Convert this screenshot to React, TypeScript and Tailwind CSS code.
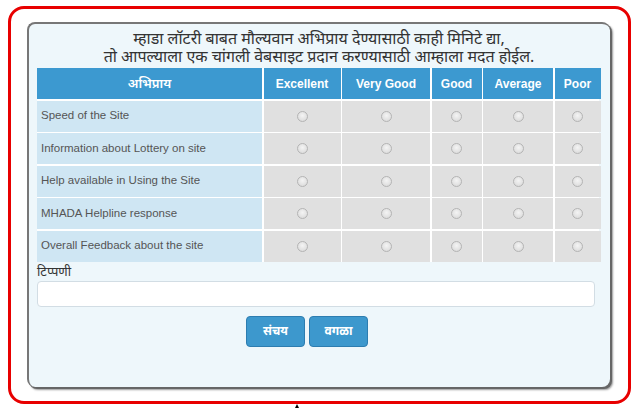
import React from 'react';

const cols = ['Excellent', 'Very Good', 'Good', 'Average', 'Poor'];

const rows = [
  'Speed of the Site',
  'Information about Lottery on site',
  'Help available in Using the Site',
  'MHADA Helpline response',
  'Overall Feedback about the site',
];

const Radio: React.FC = () => (
  <span className="block w-[11px] h-[11px] rounded-full border border-[#b4b4b4] bg-[radial-gradient(circle_at_50%_40%,#f4f4f4,#d6d6d6)]" />
);

export default function App() {
  return (
    <div className="w-[639px] h-[408px] bg-white relative" style={{ fontFamily: '"Noto Sans", "Liberation Sans", sans-serif' }}>
      <div className="pl-[8px] pt-[6px]">
        <div className="w-[623px] h-[398px] border-[3px] border-[#e80000] rounded-[16px] pl-[16px] pt-[13px]">
          {/* dialog */}
          <div className="w-[583px] h-[365px] bg-[#eef7fb] rounded-[8px] border-l-2 border-t-2 border-[#777] shadow-[2px_2px_0_#666,3px_3px_2px_#999] pl-[8px] pr-[9px]">
            <p className="text-center text-[#333] text-[16px] leading-[18px] pt-[5px] pb-[3px]">
              म्हाडा लॉटरी बाबत मौल्यवान अभिप्राय देण्यासाठी काही मिनिटे द्या,
              <br />
              तो आपल्याला एक चांगली वेबसाइट प्रदान करण्यासाठी आम्हाला मदत होईल.
            </p>

            <div className="grid grid-cols-[225px_77px_88px_50px_70px_46px] gap-[1.5px] bg-white w-[562px]">
              <div className="h-[31px] bg-[#3c99d0] text-white text-[13px] font-semibold flex items-center justify-center">अभिप्राय</div>
              {cols.map((c) => (
                <div
                  key={c}
                  className="h-[31px] bg-[#3c99d0] text-white text-[12px] font-bold flex items-center justify-center"
                  style={{ fontFamily: '"Liberation Sans", Arial, sans-serif' }}
                >
                  {c}
                </div>
              ))}
              {rows.map((r) => (
                <React.Fragment key={r}>
                  <div
                    className="h-[31px] bg-[#cfe6f3] text-[#555] text-[11.5px] flex items-center pl-[4px]"
                    style={{ fontFamily: '"Liberation Sans", Arial, sans-serif' }}
                  >
                    {r}
                  </div>
                  {cols.map((c) => (
                    <div key={c} className="h-[31px] bg-[#e0e0e0] flex items-center justify-center">
                      <Radio />
                    </div>
                  ))}
                </React.Fragment>
              ))}
            </div>

            <div className="text-[#333] text-[13px] leading-[16px] pt-[1px]">टिप्पणी</div>
            <div className="w-[558px] h-[26px] mt-[2px] bg-white border border-[#d2dde4] rounded-[4px]" />

            <div className="flex gap-[4px] pl-[209px] mt-[9px]">
              <button className="w-[59px] h-[31px] bg-[#3d98cd] border border-[#2d7db0] rounded-[4px] text-white text-[12px] font-bold">
                संचय
              </button>
              <button className="w-[59px] h-[31px] bg-[#3d98cd] border border-[#2d7db0] rounded-[4px] text-white text-[12px] font-bold">
                वगळा
              </button>
            </div>
          </div>
        </div>
      </div>
      <span className="absolute left-[295px] top-[404px] w-0 h-0 border-l-[2px] border-r-[2px] border-b-[4px] border-l-transparent border-r-transparent border-b-black" />
    </div>
  );
}
